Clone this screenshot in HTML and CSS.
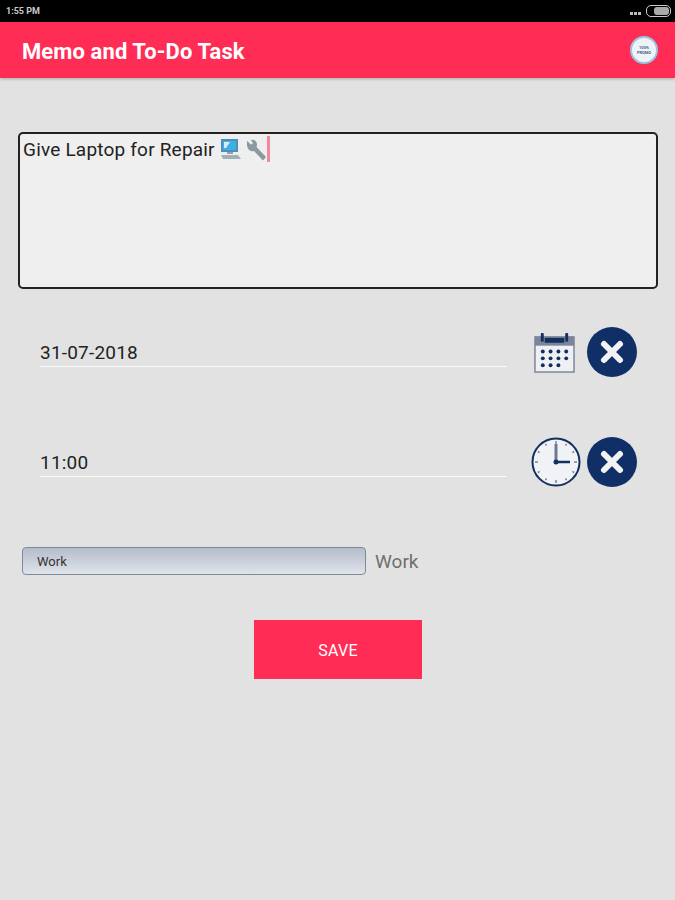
FILE: index.html
```html
<!DOCTYPE html>
<html lang="en">
<head>
  <meta charset="UTF-8">
  <title>Memo and To-Do Task</title>
  <link rel="stylesheet" href="styles.css">
</head>
<body>
  <!-- Status bar -->
  <div class="status">
    <span class="hora">1:55 PM</span>
    <div class="status-der">
      <span class="puntos"><i></i><i></i><i></i></span>
      <span class="bateria"><b></b></span>
    </div>
  </div>

  <!-- App bar -->
  <div class="barra">
    <h1>Memo and To-Do Task</h1>
    <div class="promo"><span>100%<br>PROMO</span></div>
  </div>

  <div class="contenido">
    <!-- Memo -->
    <div class="memo">
      <span>Give Laptop for Repair</span>
      <svg class="emoji" width="24" height="24" viewBox="0 0 24 24">
        <rect x="2" y="2" width="17" height="13" fill="#4d8fb5"/>
        <rect x="4" y="4" width="13" height="9" fill="#3fb0e6"/>
        <path d="M5 5h6l-4 6H5z" fill="#d5eefa"/>
        <path d="M8 15h6v2H8z" fill="#8da4ad"/>
        <path d="M2 18h17l3 4H4z" fill="#9fb0b6"/>
      </svg>
      <svg class="emoji llave" width="24" height="24" viewBox="0 0 24 24">
        <path d="M3 3l4 3.500 2-1-2-3.500c3-1 6 1 6 4.500 0 1 0 1.500-.5 2.500L22 19l-3 3.500-9-9.500c-3 1-8-1-7-10z" fill="#8a9aa3"/>
      </svg>
      <span class="cursor"></span>
    </div>

    <!-- Fecha -->
    <div class="fila">
      <div class="campo">31-07-2018</div>
      <svg class="icono-cal" width="41" height="41" viewBox="0 0 42 42">
        <rect x="1" y="5" width="40" height="36" fill="#eef0f3" stroke="#7c8499" stroke-width="1.500"/>
        <rect x="1" y="5" width="40" height="9" fill="#7c8499"/>
        <rect x="11" y="6" width="20" height="5" fill="#12305f"/>
        <rect x="7" y="1" width="3" height="9" rx="1" fill="#12305f"/>
        <rect x="32" y="1" width="3" height="9" rx="1" fill="#12305f"/>
        <g fill="#12305f">
          <circle cx="9" cy="20" r="2"/><circle cx="17" cy="20" r="2"/><circle cx="25" cy="20" r="2"/><circle cx="33" cy="20" r="2"/>
          <circle cx="9" cy="27" r="2"/><circle cx="17" cy="27" r="2"/><circle cx="25" cy="27" r="2"/><circle cx="33" cy="27" r="2"/>
          <circle cx="9" cy="34" r="2"/><circle cx="17" cy="34" r="2"/><circle cx="25" cy="34" r="2"/>
        </g>
      </svg>
      <svg class="cerrar" width="50" height="50" viewBox="0 0 50 50">
        <circle cx="25" cy="25" r="25" fill="#0f2f66"/>
        <path d="M17 17l16 16M33 17L17 33" stroke="#f2f2f2" stroke-width="6" stroke-linecap="round"/>
      </svg>
    </div>

    <!-- Hora -->
    <div class="fila fila-hora">
      <div class="campo">11:00</div>
      <svg class="icono-reloj" width="50" height="50" viewBox="0 0 50 50">
        <circle cx="25" cy="25" r="23.500" fill="#f1f2f5" stroke="#12305f" stroke-width="2"/>
        <g stroke="#7c8499" stroke-width="1.500">
          <path d="M25 4v3M25 43v3M4 25h3M43 25h3M14.500 6.800l1 1.800M35.500 6.800l-1 1.800M6.800 14.500l1.800 1M43.200 14.500l-1.800 1M6.800 35.500l1.800-1M43.200 35.500l-1.800-1M14.500 43.200l1-1.800M35.500 43.200l-1-1.800"/>
        </g>
        <path d="M25 7v18" stroke="#6f7a92" stroke-width="3"/>
        <path d="M25 25h14" stroke="#12305f" stroke-width="2.500"/>
        <circle cx="25" cy="25" r="2.500" fill="#12305f"/>
      </svg>
      <svg class="cerrar" width="50" height="50" viewBox="0 0 50 50">
        <circle cx="25" cy="25" r="25" fill="#0f2f66"/>
        <path d="M17 17l16 16M33 17L17 33" stroke="#f2f2f2" stroke-width="6" stroke-linecap="round"/>
      </svg>
    </div>

    <!-- Categoria -->
    <div class="categoria">
      <div class="selector">Work</div>
      <span class="cat-texto">Work</span>
    </div>

    <button class="guardar">SAVE</button>
  </div>
</body>
</html>
```

FILE: styles.css
```css
html, body {
  height: 100%;
}

body {
  background: #e2e2e2;
  color: #222;
  font-family: Roboto, sans-serif;
  margin: 0;
  overflow: hidden;
}

.status {
  background: #000;
  height: 22px;
  display: flex;
  align-items: center;
  justify-content: space-between;
  padding: 0 4px 0 6px;
}

.hora {
  color: #c8c8c8;
  font-size: 9px;
  font-weight: 700;
}

.status-der {
  display: flex;
  align-items: center;
  gap: 5px;
}

.puntos {
  display: flex;
  gap: 1px;
  margin-top: 4px;
}

.puntos i {
  width: 3px;
  height: 3px;
  background: #bbb;
}

.bateria {
  width: 21px;
  height: 8px;
  border: 1px solid #ccc;
  border-radius: 5px;
  display: flex;
  justify-content: flex-end;
  padding: 1px;
}

.bateria b {
  width: 15px;
  background: #aaa;
  border-radius: 3px;
}

.barra {
  background: #ff2d55;
  height: 56px;
  display: flex;
  align-items: center;
  justify-content: space-between;
  padding: 0 17px 0 22px;
  box-shadow: 0 1px 3px rgba(0, 0, 0, 0.25);
}

.barra h1 {
  color: #fff;
  font-size: 22px;
  font-weight: 700;
  letter-spacing: 0.1px;
  margin: 2px 0 0 0;
}

.promo {
  width: 28px;
  height: 28px;
  border-radius: 50%;
  background: #eef3f8;
  border: 2px solid #9cc4e0;
  box-sizing: border-box;
  display: flex;
  align-items: center;
  justify-content: center;
  text-align: center;
}

.promo span {
  color: #4a5f80;
  font-size: 4px;
  font-weight: 700;
  line-height: 5px;
}

.contenido {
  display: flex;
  flex-direction: column;
  padding: 54px 17px 0 18px;
}

.memo {
  height: 157px;
  box-sizing: border-box;
  background: #efefef;
  border: 2px solid #222;
  border-radius: 5px;
  padding: 4px 3px;
  font-size: 19px;
  letter-spacing: 0.2px;
  line-height: 24px;
  display: flex;
  align-items: flex-start;
  color: #222;
}

.emoji {
  margin-left: 4px;
  margin-top: -1px;
}

.llave {
  margin-left: 1px;
  margin-top: 0;
}

.cursor {
  width: 3px;
  height: 26px;
  background: #f08a9c;
  margin: -2px 0 0 -1px;
}

.fila {
  display: flex;
  align-items: center;
  height: 50px;
  margin-top: 38px;
  padding-left: 22px;
}

.fila-hora {
  margin-top: 60px;
}

.campo {
  width: 467px;
  height: 29px;
  box-sizing: border-box;
  border-bottom: 1px solid #fafafa;
  font-size: 19px;
  letter-spacing: 0.2px;
  line-height: 30px;
  color: #222;
  flex: none;
}

.icono-cal {
  margin-left: 27px;
  margin-right: 12px;
}

.icono-reloj {
  margin-left: 24px;
  margin-right: 6px;
}

.categoria {
  display: flex;
  align-items: center;
  gap: 9px;
  margin-top: 60px;
  padding-left: 4px;
}

.selector {
  width: 344px;
  height: 28px;
  box-sizing: border-box;
  background: linear-gradient(#b4bdcb, #e0e4ea);
  border: 1px solid #7f8a99;
  border-radius: 4px;
  padding-left: 14px;
  font-size: 13px;
  line-height: 27px;
  color: #333;
}

.cat-texto {
  color: #6f6f6f;
  font-size: 19px;
}

.guardar {
  align-self: flex-start;
  margin: 45px 0 0 236px;
  width: 168px;
  height: 59px;
  background: #ff2d55;
  color: #fff;
  border: none;
  padding-top: 3px;
  font-family: Roboto, sans-serif;
  font-size: 16px;
  letter-spacing: 0.3px;
}
```
